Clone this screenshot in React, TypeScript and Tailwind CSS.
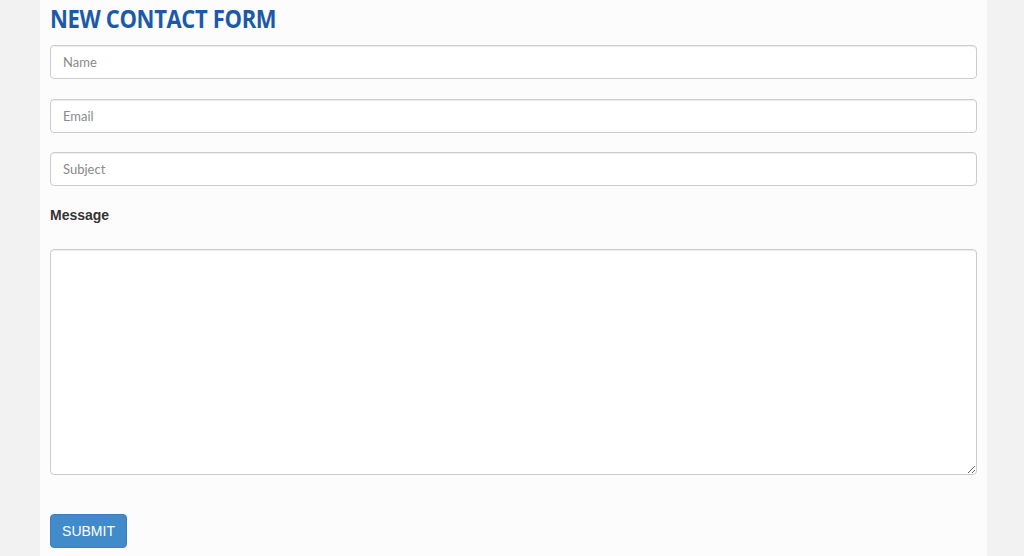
import React from "react";

export default function App() {
  return (
    <div className="min-h-[556px] w-full bg-[#f2f2f2]">
      <div className="ml-[40px] w-[947px] bg-[#fcfcfc] px-[10px] pt-[2px] pb-[20px]">
        <h1 className="text-[#1a5aa8] font-bold text-[25px] leading-[33px] tracking-[-0.4px] font-['Open_Sans',sans-serif] [transform:scaleX(0.88)] origin-left">
          NEW CONTACT FORM
        </h1>
        <div className="mt-[10px] flex flex-col gap-[19.5px]">
          {["Name", "Email", "Subject"].map((p) => (
            <input
              key={p}
              placeholder={p}
              className="h-[34px] w-full rounded-[4px] border border-[#cccccc] bg-white px-[12px] text-[13px] font-['Lato',sans-serif] text-[#555] placeholder:text-[#8a8a8a] shadow-[inset_0_1px_1px_rgba(0,0,0,0.075)] outline-none"
            />
          ))}
        </div>
        <label className="mt-[20px] block text-[14px] font-bold text-[#333] font-['Liberation_Sans',Arial,sans-serif] leading-[18px]">
          Message
        </label>
        <textarea className="mt-[25px] block h-[226px] w-full rounded-[4px] border border-[#cccccc] bg-white shadow-[inset_0_1px_1px_rgba(0,0,0,0.075)] outline-none" />
        <button className="mt-[39px] h-[34px] w-[77px] rounded-[4px] bg-[#428bca] text-white text-[14px] font-['Liberation_Sans',Arial,sans-serif] border border-[#3b7fc0]">
          SUBMIT
        </button>
      </div>
    </div>
  );
}
